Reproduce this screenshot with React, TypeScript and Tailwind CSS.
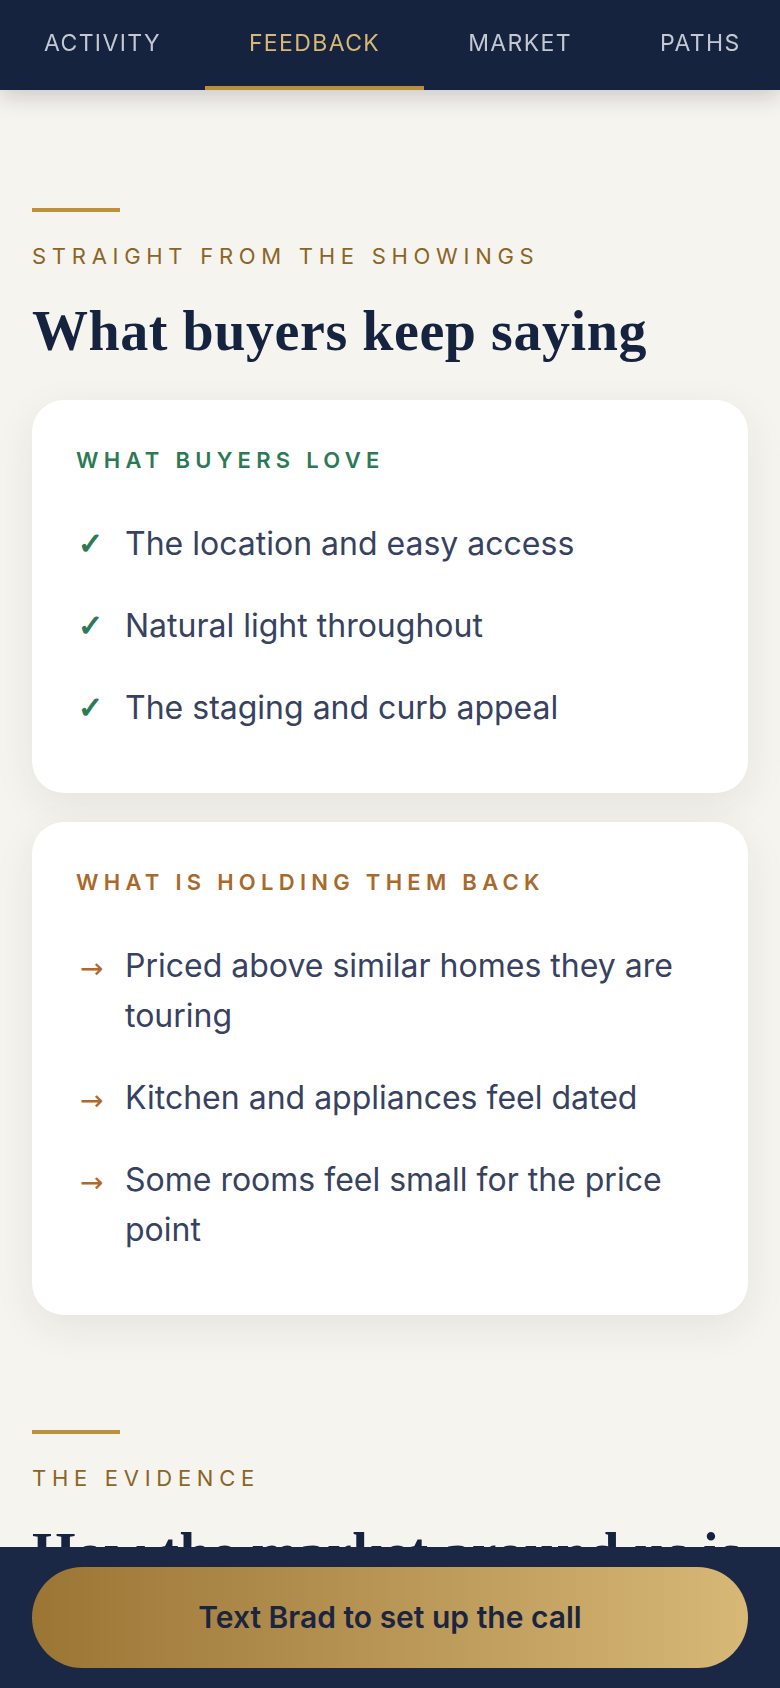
const tabs = ["Activity", "Feedback", "Market", "Paths"];

const loves = [
  "The location and easy access",
  "Natural light throughout",
  "The staging and curb appeal",
];

const concerns = [
  "Priced above similar homes they are touring",
  "Kitchen and appliances feel dated",
  "Some rooms feel small for the price point",
];

function SectionHead({ eyebrow, title }: { eyebrow: string; title: string }) {
  return (
    <div>
      <div className="mb-[28px] h-[4px] w-[88px] bg-[#bb913e]" />
      <p className="mb-[26px] text-[22px] leading-[33px] uppercase tracking-[0.26em] text-[#8b6526]">
        {eyebrow}
      </p>
      <h2 className="font-['Liberation_Serif',serif] text-[56px] font-bold leading-[64px] tracking-[0.01em] text-[#15233f]">
        {title}
      </h2>
    </div>
  );
}

function ListCard({
  label,
  labelClass,
  items,
  marker,
  markerClass,
}: {
  label: string;
  labelClass: string;
  items: string[];
  marker: string;
  markerClass: string;
}) {
  return (
    <div className="rounded-[32px] bg-white p-11 shadow-[0_12px_40px_rgba(40,40,30,0.08)]">
      <p className={`mb-[26px] text-[22px] font-semibold leading-[33px] uppercase tracking-[0.24em] ${labelClass}`}>
        {label}
      </p>
      <ul>
        {items.map((item) => (
          <li key={item} className="flex py-4">
            <span className={`h-[50px] w-[49px] flex-none leading-[50px] font-['DejaVu_Sans',sans-serif] ${markerClass}`}>
              {marker}
            </span>
            <span className="text-[32px] leading-[50px] text-[#374261]">{item}</span>
          </li>
        ))}
      </ul>
    </div>
  );
}

export default function App() {
  return (
    <div className="min-h-screen bg-[#f6f4ef] pb-[180px] font-['Inter',sans-serif]">
      <nav className="sticky top-0 z-10 flex bg-[#15233f] shadow-[0_6px_22px_rgba(20,25,40,0.2)]">
        {tabs.map((tab) => {
          const active = tab === "Feedback";
          return (
            <button
              key={tab}
              className={
                active
                  ? "h-[90px] flex-none border-b-4 border-[#b98f3d] px-[44px] text-[23px] uppercase tracking-[0.06em] text-[#d9b774]"
                  : "h-[90px] flex-none border-b-4 border-transparent px-[44px] text-[23px] uppercase tracking-[0.06em] text-[#c3c8d3]"
              }
            >
              {tab}
            </button>
          );
        })}
      </nav>

      <main className="px-8">
        {/* Feedback */}
        <section className="pt-[118px]">
          <div className="mb-[37px]">
            <SectionHead eyebrow="Straight from the showings" title="What buyers keep saying" />
          </div>
          <div className="flex flex-col gap-[29px]">
            <ListCard
              label="What buyers love"
              labelClass="text-[#2c7a55]"
              items={loves}
              marker="✓"
              markerClass="pl-[2px] text-[30px] font-bold text-[#2c7a55] [-webkit-text-stroke:1.2px_#2c7a55]"
            />
            <ListCard
              label="What is holding them back"
              labelClass="text-[#a8692b]"
              items={concerns}
              marker="→"
              markerClass="pl-[4px] pt-[3px] text-[28px] text-[#b0692b]"
            />
          </div>
        </section>

        {/* Evidence */}
        <section className="pt-[115px]">
          <SectionHead eyebrow="The evidence" title="How the market around us is shifting" />
          <p className="mt-8 text-[32px] leading-[50px] text-[#374261]">
            Nearby listings, recent sales and price changes in the neighborhood.
          </p>
        </section>
      </main>

      <div className="fixed inset-x-0 bottom-0 z-20 bg-[#1b2845] px-8 py-5">
        <button className="h-[101px] w-full rounded-full bg-gradient-to-r from-[#9b7534] to-[#d7b877] text-[30px] font-semibold text-[#1b2540]">
          Text Brad to set up the call
        </button>
      </div>
    </div>
  );
}
